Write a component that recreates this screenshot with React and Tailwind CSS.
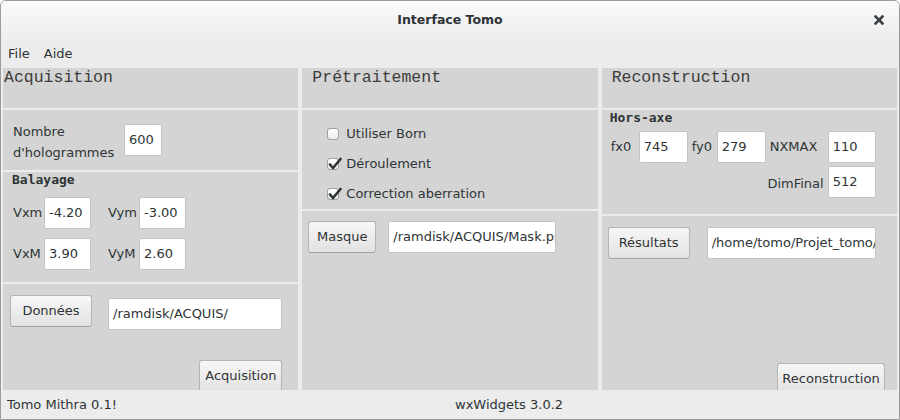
import React from 'react';

const sans = "font-['DejaVu_Sans',sans-serif]";
const mono = "font-['DejaVu_Sans_Mono',monospace]";
const thinMono = "font-['Liberation_Mono',monospace]";

function Field({ value, className = '' }) {
  return (
    <div
      className={`h-[32px] bg-white border border-[#c4c4c4] rounded-[2px] flex items-center pl-[4px] overflow-hidden whitespace-nowrap text-[13px] text-[#2e3436] ${className}`}
    >
      {value}
    </div>
  );
}

function Button({ label, className = '' }) {
  return (
    <div
      className={`h-[32px] shrink-0 flex items-center justify-center rounded-[3px] border border-[#b4b4b4] border-b-[#a2a2a2] bg-gradient-to-b from-[#f7f7f7] to-[#e2e2e2] text-[13px] text-[#2e3436] ${className}`}
    >
      {label}
    </div>
  );
}

function Check({ label, checked }) {
  return (
    <div className="flex items-center h-[30px]">
      <div className="relative w-[12px] h-[12px] rounded-[3px] border border-[#a0a0a0] bg-gradient-to-b from-[#ffffff] to-[#ececec]">
        {checked && (
          <svg className="absolute left-[0px] top-[-2px]" width="14" height="14" viewBox="0 0 14 14">
            <path d="M2 7.5 L5 11 L12.5 2" fill="none" stroke="#2e3436" strokeWidth="2.6" strokeLinecap="round" strokeLinejoin="round" />
          </svg>
        )}
      </div>
      <span className="ml-[7px]">{label}</span>
    </div>
  );
}

function Header({ title, className = '' }) {
  return (
    <div className={`h-[40px] bg-[#d4d4d4] ${thinMono} text-[16.5px] leading-[20px] text-[#3c3c3c] ${className}`}>
      {title}
    </div>
  );
}

export default function App() {
  return (
    <div className={`w-[900px] h-[420px] flex flex-col bg-[#ececec] border border-[#9c9c9c] rounded-t-[6px] overflow-hidden ${sans} text-[13px] text-[#2e3436]`}>
      {/* Title bar */}
      <div className="h-[39px] shrink-0 relative flex items-center justify-center bg-gradient-to-b from-[#fafafa] to-[#ededed]">
        <span className="font-bold text-[12.5px] text-[#2e3436]">Interface Tomo</span>
        <svg className="absolute right-[15px] top-[14px]" width="10" height="10" viewBox="0 0 10 10">
          <path d="M1.5 1.5 L8.5 8.5 M8.5 1.5 L1.5 8.5" stroke="#3c4245" strokeWidth="2.6" strokeLinecap="square" />
        </svg>
      </div>

      {/* Menu */}
      <div className="h-[28px] shrink-0 flex items-center pl-[7px] gap-[14px]">
        <span>File</span>
        <span>Aide</span>
      </div>

      {/* Panels */}
      <div className="flex-1 flex gap-[4px] px-[2px] min-h-0">
        {/* Acquisition */}
        <div className="flex-1 flex flex-col gap-[2px]">
          <Header title="Acquisition" className="pl-[1px]" />
          <div className="h-[60px] bg-[#d4d4d4] flex items-center pl-[10px]">
            <div className="w-[111px] leading-[21px] mt-[3px]">
              Nombre
              <br />
              d'hologrammes
            </div>
            <Field value="600" className="w-[38px]" />
          </div>
          <div className="h-[110px] bg-[#d4d4d4] pl-[9px]">
            <div className={`${mono} font-bold text-[13px] leading-[16px]`}>Balayage</div>
            <div className="mt-[9px] flex flex-col gap-[9px] pl-[1px]">
              <div className="flex items-center">
                <span className="w-[31px]">Vxm</span>
                <Field value="-4.20" className="w-[47px]" />
                <span className="w-[48px] pl-[17px]">Vym</span>
                <Field value="-3.00" className="w-[47px]" />
              </div>
              <div className="flex items-center">
                <span className="w-[31px]">VxM</span>
                <Field value="3.90" className="w-[47px]" />
                <span className="w-[48px] pl-[17px]">VyM</span>
                <Field value="2.60" className="w-[47px]" />
              </div>
            </div>
          </div>
          <div className="flex-1 bg-[#d4d4d4] overflow-hidden flex flex-col pl-[7px] pr-[16px] pt-[11px]">
            <div className="flex items-start">
              <Button label="Données" className="w-[82px]" />
              <Field value="/ramdisk/ACQUIS/" className="ml-[16px] mt-[3px] flex-1" />
            </div>
            <div className="flex justify-end mt-[30px]">
              <Button label="Acquisition" className="w-[83px]" />
            </div>
          </div>
        </div>

        {/* Prétraitement */}
        <div className="flex-1 flex flex-col gap-[2px]">
          <Header title="Prétraitement" className="pl-[10px]" />
          <div className="h-[99px] bg-[#d4d4d4] flex flex-col justify-center pl-[25px] pt-[8px]">
            <Check label="Utiliser Born" />
            <Check label="Déroulement" checked />
            <Check label="Correction aberration" checked />
          </div>
          <div className="flex-1 bg-[#d4d4d4] pl-[6px] pt-[10px]">
            <div className="flex items-center">
              <Button label="Masque" className="w-[68px] h-[30px]" />
              <Field value="/ramdisk/ACQUIS/Mask.png" className="ml-[12px] w-[168px]" />
            </div>
          </div>
        </div>

        {/* Reconstruction */}
        <div className="flex-1 flex flex-col gap-[2px]">
          <Header title="Reconstruction" className="pl-[10px]" />
          <div className="h-[104px] bg-[#d4d4d4] pl-[8px]">
            <div className={`${mono} font-bold text-[13px] leading-[16px]`}>Hors-axe</div>
            <div className="pl-[1px] mt-[5px] flex items-center">
              <span className="w-[28px]">fx0</span>
              <Field value="745" className="w-[49px]" />
              <span className="w-[29px] pl-[4px]">fy0</span>
              <Field value="279" className="w-[49px]" />
              <span className="w-[62px] pl-[4px]">NXMAX</span>
              <Field value="110" className="w-[48px]" />
            </div>
            <div className="w-[266px] mt-[3px] flex items-center justify-end">
              <span className="pr-[4px] pt-[4px]">DimFinal</span>
              <Field value="512" className="w-[48px]" />
            </div>
          </div>
          <div className="flex-1 bg-[#d4d4d4] overflow-hidden flex flex-col pl-[6px] pt-[11px]">
            <div className="flex items-center">
              <Button label="Résultats" className="w-[82px]" />
              <Field value="/home/tomo/Projet_tomo/" className="ml-[17px] w-[169px]" />
            </div>
            <div className="flex justify-end pr-[12px] mt-[104px]">
              <Button label="Reconstruction" className="w-[108px]" />
            </div>
          </div>
        </div>
      </div>

      {/* Status bar */}
      <div className="h-[29px] shrink-0 flex items-center">
        <span className="w-[449px] pl-[6px]">Tomo Mithra 0.1!</span>
        <span className="pl-[5px]">wxWidgets 3.0.2</span>
      </div>
    </div>
  );
}
